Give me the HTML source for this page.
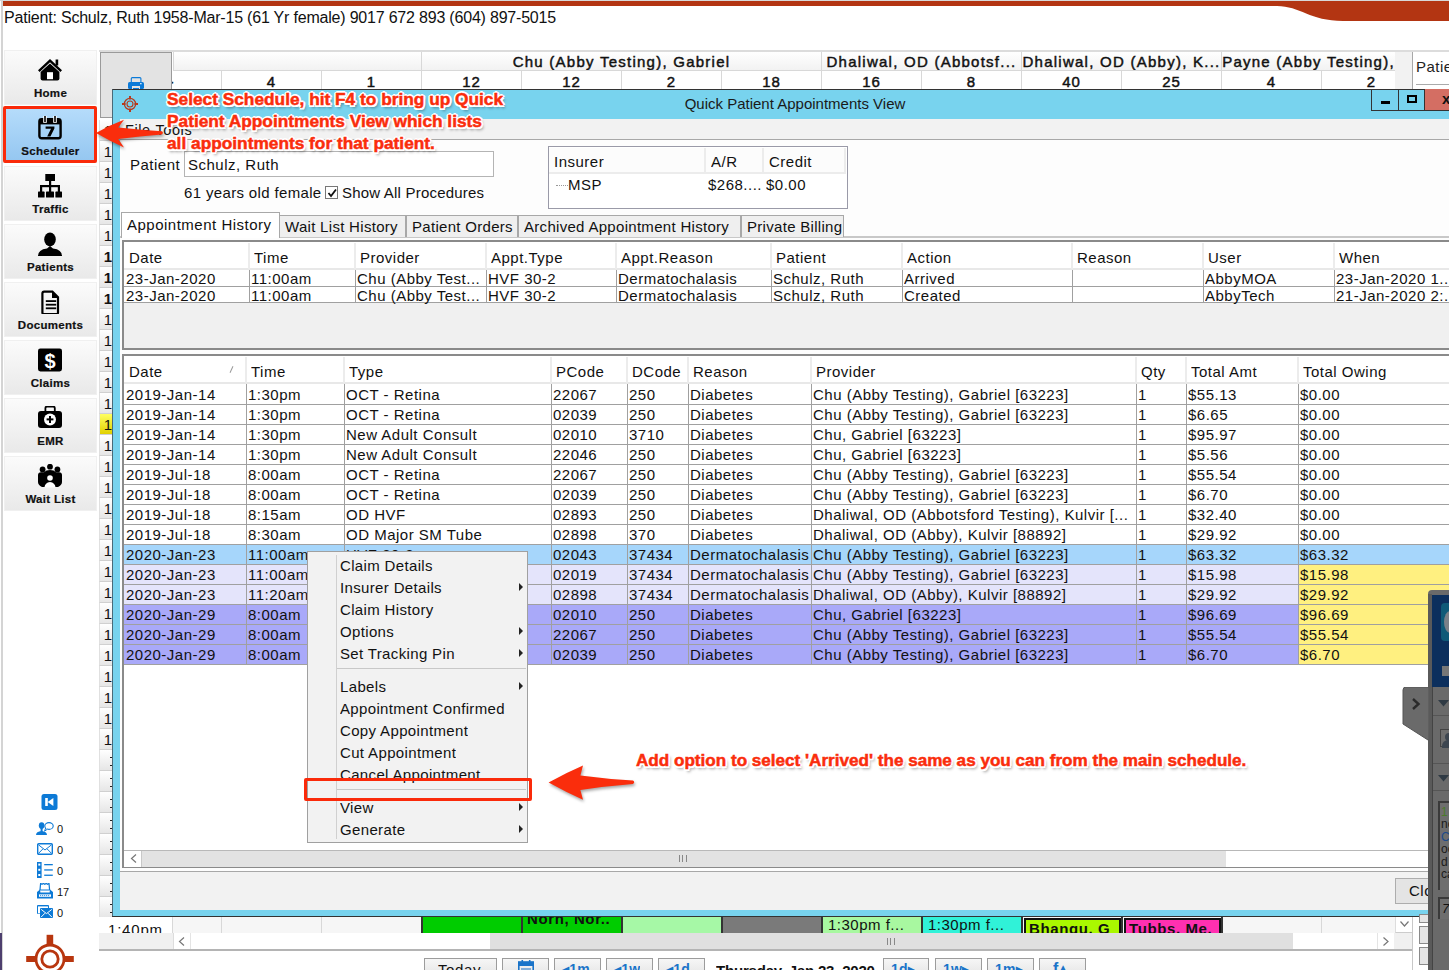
<!DOCTYPE html><html><head><meta charset="utf-8"><style>
*{margin:0;padding:0;box-sizing:border-box}
html,body{width:1449px;height:970px;overflow:hidden;background:#fff;font-family:"Liberation Sans", sans-serif;color:#111}
.ab{position:absolute}
.t{position:absolute;white-space:nowrap;font-size:15px;letter-spacing:0.5px;line-height:20px;overflow:hidden}
.sb{position:absolute;left:4px;width:93px;height:55px;background:linear-gradient(#fbfbfb,#e9e9e9);border:1px solid #f0f0f0}
.sbl{position:absolute;left:0;width:100%;top:35px;text-align:center;font-weight:bold;font-size:11.5px;letter-spacing:0.3px;color:#111;-webkit-text-stroke:0.2px #111}
.hdr{position:absolute;white-space:nowrap;font-size:15px;letter-spacing:1.25px;line-height:18px;text-align:center;color:#111;overflow:hidden;-webkit-text-stroke:0.45px #111}
</style></head><body>

<div class="ab" style="left:0;top:0;width:1449px;height:1px;background:#d8d8d8"></div>
<svg class="ab" style="left:0;top:0" width="1449" height="24"><path d="M3 1 H1449 V21 H1343 C1310 21 1300 6 1277 6 H3 Z" fill="#b33512"/></svg>
<div class="ab" style="left:4px;top:8px;font-size:16px;letter-spacing:-0.2px;line-height:20px;color:#111;white-space:nowrap">Patient: Schulz, Ruth 1958-Mar-15 (61 Yr female) 9017 672 893 (604) 897-5015</div>
<div class="ab" style="left:1px;top:0px;width:2px;height:970px;background:#d4d4d4"></div>
<div class="sb" style="top:50px;"><svg class="ab" style="left:33px;top:7px" width="24" height="24" viewBox="0 0 24 24"><path d="M0.8 13.2 L12 2.6 L23.2 13.2" fill="none" stroke="#000" stroke-width="2.4" stroke-linejoin="miter"/><rect x="17.6" y="1.5" width="2.6" height="6" fill="#000"/><path d="M2.6 14 L12 5.4 L21.4 14 V20.6 Q21.4 22.6 19.4 22.6 H4.6 Q2.6 22.6 2.6 20.6 Z" fill="#000"/><rect x="9" y="14.2" width="6" height="7" fill="#fff"/></svg><div class="sbl" style="top:36px">Home</div></div>
<div class="sb" style="top:108px;background:linear-gradient(#b5dcfb,#94c6f0);"><svg class="ab" style="left:33px;top:7px" width="24" height="24" viewBox="0 0 24 24"><rect x="1.4" y="3.2" width="21.2" height="19" rx="2.2" fill="none" stroke="#000" stroke-width="2.4"/><rect x="1.4" y="3.2" width="21.2" height="5.2" fill="#000"/><rect x="5.2" y="0" width="3.6" height="6.8" fill="#fff"/><rect x="15.2" y="0" width="3.6" height="6.8" fill="#fff"/><rect x="6.2" y="0" width="1.6" height="6" fill="#000"/><rect x="16.2" y="0" width="1.6" height="6" fill="#000"/><path d="M7.6 10.6 H16.4 V12.4 L12.4 20.6 H9.2 L13 12.8 H7.6 Z" fill="#000"/></svg><div class="sbl" style="top:36px">Scheduler</div></div>
<div class="sb" style="top:166px;"><svg class="ab" style="left:33px;top:7px" width="24" height="24" viewBox="0 0 24 24"><rect x="7.3" y="0" width="9.7" height="7" fill="#000"/><rect x="11" y="6" width="2.2" height="6" fill="#000"/><rect x="2" y="11" width="20" height="2.2" fill="#000"/><rect x="2" y="11" width="2.2" height="8" fill="#000"/><rect x="11" y="11" width="2.2" height="8" fill="#000"/><rect x="19.8" y="11" width="2.2" height="8" fill="#000"/><rect x="0" y="17.6" width="6.6" height="6" rx="0.6" fill="#000"/><rect x="8" y="17.6" width="8" height="6" rx="0.6" fill="#000"/><rect x="17.4" y="17.6" width="6.6" height="6" rx="0.6" fill="#000"/></svg><div class="sbl" style="top:36px">Traffic</div></div>
<div class="sb" style="top:224px;"><svg class="ab" style="left:33px;top:7px" width="24" height="24" viewBox="0 0 24 24"><ellipse cx="12" cy="7.4" rx="5.8" ry="7" fill="#000"/><path d="M0 24 Q0 17.5 9 16.5 L12 14 L15 16.5 Q24 17.5 24 24 Z" fill="#000"/></svg><div class="sbl" style="top:36px">Patients</div></div>
<div class="sb" style="top:282px;"><svg class="ab" style="left:33px;top:7px" width="24" height="24" viewBox="0 0 24 24"><path d="M4.4 3.4 Q4.4 1.6 6.2 1.6 H14.4 L20 7.2 V22.4 Q20 24 18.4 24 H6 Q4.4 24 4.4 22.4 Z" fill="none" stroke="#000" stroke-width="2.2"/><path d="M14 1.6 L20.4 8 H14 Z" fill="#000"/><rect x="7.8" y="10.2" width="10.4" height="1.8" fill="#000"/><rect x="7.8" y="13.8" width="10.4" height="1.8" fill="#000"/><rect x="7.8" y="17.4" width="10.4" height="1.8" fill="#000"/></svg><div class="sbl" style="top:36px">Documents</div></div>
<div class="sb" style="top:340px;"><svg class="ab" style="left:33px;top:7px" width="24" height="24" viewBox="0 0 24 24"><rect x="0" y="0.4" width="24" height="23" rx="2.4" fill="#000"/><text x="12" y="19.6" text-anchor="middle" font-family="Liberation Sans" font-weight="bold" font-size="20" fill="#fff">$</text></svg><div class="sbl" style="top:36px">Claims</div></div>
<div class="sb" style="top:398px;"><svg class="ab" style="left:33px;top:7px" width="24" height="24" viewBox="0 0 24 24"><rect x="7.4" y="0.6" width="9.4" height="6" rx="1.6" fill="none" stroke="#000" stroke-width="1.8"/><rect x="0" y="5" width="24" height="17" rx="3" fill="#000"/><circle cx="12" cy="13.4" r="6" fill="#fff"/><rect x="11" y="10" width="2" height="7" fill="#000"/><rect x="8.6" y="12.4" width="6.8" height="2" fill="#000"/></svg><div class="sbl" style="top:36px">EMR</div></div>
<div class="sb" style="top:456px;"><svg class="ab" style="left:33px;top:7px" width="24" height="24" viewBox="0 0 24 24"><circle cx="4.6" cy="5.4" r="2.9" fill="#000"/><circle cx="12" cy="2.7" r="2.9" fill="#000"/><circle cx="19.4" cy="5.4" r="2.9" fill="#000"/><path d="M0 11 Q0 8.4 3 8.2 L6 8.2 Q8 6 12 6 Q16 6 18 8.2 L21 8.2 Q24 8.4 24 11 V18 Q24 21 20 23 H4 Q0 21 0 18 Z" fill="#000"/><circle cx="12" cy="14" r="2.8" fill="#fff"/><path d="M6.4 23.4 Q7 18.6 12 18 Q17 18.6 17.6 23.4 Z" fill="#fff"/></svg><div class="sbl" style="top:36px">Wait List</div></div>
<svg class="ab" style="left:41px;top:794px" width="17" height="16" viewBox="0 0 17 16"><rect x="0.5" y="0" width="16" height="16" rx="2.5" fill="#0d7ad6"/><rect x="4.2" y="4" width="2.6" height="8" fill="#fff"/><path d="M6.6 8 L12.4 4 V12 Z" fill="#fff"/></svg>
<svg class="ab" style="left:36px;top:822px" width="18" height="14" viewBox="0 0 18 14"><ellipse cx="5.6" cy="3.6" rx="2.8" ry="3.4" fill="#0d7ad6"/><path d="M0 13 Q0 9.6 5.6 9 Q11 9.6 11 13 Z" fill="#0d7ad6"/><rect x="4.6" y="6" width="2" height="4" fill="#0d7ad6"/><ellipse cx="13" cy="4" rx="4.2" ry="3.4" fill="#fff" stroke="#0d7ad6" stroke-width="1.1"/><path d="M9.6 6 L8.6 9.2 L11.6 7" fill="#fff" stroke="#0d7ad6" stroke-width="1"/></svg>
<svg class="ab" style="left:37px;top:843px" width="16" height="12" viewBox="0 0 16 12"><rect x="0.7" y="0.7" width="14.6" height="10.6" rx="1" fill="none" stroke="#0d7ad6" stroke-width="1.4"/><path d="M1.5 1.8 L8 7 L14.5 1.8 M1.5 10.4 L6 5.8 M14.5 10.4 L10 5.8" fill="none" stroke="#0d7ad6" stroke-width="1"/></svg>
<svg class="ab" style="left:37px;top:862px" width="16" height="16" viewBox="0 0 16 16"><rect x="0" y="0" width="4.6" height="16" fill="#0d7ad6"/><rect x="1.3" y="1.6" width="2" height="2" fill="#fff"/><rect x="1.3" y="6.8" width="2" height="2" fill="#fff"/><rect x="1.3" y="12" width="2" height="2" fill="#fff"/><rect x="7.2" y="2" width="8.6" height="1.3" fill="#0d7ad6"/><rect x="7.2" y="7.3" width="8.6" height="1.3" fill="#0d7ad6"/><rect x="7.2" y="12.6" width="8.6" height="1.3" fill="#0d7ad6"/></svg>
<svg class="ab" style="left:37px;top:883px" width="16" height="16" viewBox="0 0 16 16"><path d="M3.6 0.4 L5 1.2 L6.4 0.4 L7.8 1.2 L9.2 0.4 L10.6 1.2 L12 0.4 L12.6 7 H3 Z" fill="#fff" stroke="#0d7ad6" stroke-width="1.2"/><path d="M0 9 L3 6.6 L3.4 9.6 H12.6 L13 6.6 L16 9 V15.6 H0 Z" fill="#0d7ad6"/><rect x="2" y="11.4" width="12" height="2.4" fill="#fff"/><path d="M3 12.6 H13" stroke="#0d7ad6" stroke-width="0.8" stroke-dasharray="1.2 0.8"/></svg>
<svg class="ab" style="left:37px;top:905px" width="16" height="13" viewBox="0 0 16 13"><rect x="0" y="0" width="12" height="9" rx="1" fill="#0d7ad6"/><rect x="1" y="1.4" width="10" height="7" fill="#fff"/><rect x="3" y="3" width="13" height="10" rx="1" fill="#0d7ad6"/><path d="M4.2 4.4 L9.5 8.6 L14.8 4.4 M4.2 12 L8 8.2 M14.8 12 L11 8.2" fill="none" stroke="#fff" stroke-width="1"/></svg>
<div class="ab" style="left:57px;top:822px;font-size:11px;line-height:14px;color:#111">0</div>
<div class="ab" style="left:57px;top:843px;font-size:11px;line-height:14px;color:#111">0</div>
<div class="ab" style="left:57px;top:864px;font-size:11px;line-height:14px;color:#111">0</div>
<div class="ab" style="left:57px;top:885px;font-size:11px;line-height:14px;color:#111">17</div>
<div class="ab" style="left:57px;top:906px;font-size:11px;line-height:14px;color:#111">0</div>
<svg class="ab" style="left:20px;top:930px" width="60" height="40" viewBox="0 0 60 40"><circle cx="30" cy="29" r="14" fill="none" stroke="#b8360f" stroke-width="2.8"/><circle cx="30" cy="29" r="8.2" fill="none" stroke="#b8360f" stroke-width="2.8"/><rect x="26.6" y="4.8" width="6.6" height="10" fill="#b8360f"/><rect x="6.2" y="26" width="10" height="6" fill="#b8360f"/><rect x="43.8" y="26" width="10" height="6" fill="#b8360f"/></svg>
<div class="ab" style="left:0;top:933px;width:2px;height:37px;background:#4d3f6e"></div>
<div class="ab" style="left:99px;top:50px;width:1350px;height:2px;background:#dcdcdc"></div>
<div class="hdr" style="left:173px;top:52px;width:248px;height:19px;background:linear-gradient(#fff,#f2f2f2);border-left:1px solid #d8d8d8;border-bottom:1px solid #d8d8d8;top:52px;padding-top:1px"></div>
<div class="hdr" style="left:421px;top:52px;width:400px;height:19px;background:linear-gradient(#fff,#f2f2f2);border-left:1px solid #d8d8d8;border-bottom:1px solid #d8d8d8;top:52px;padding-top:1px">Chu (Abby Testing), Gabriel</div>
<div class="hdr" style="left:821px;top:52px;width:200px;height:19px;background:linear-gradient(#fff,#f2f2f2);border-left:1px solid #d8d8d8;border-bottom:1px solid #d8d8d8;top:52px;padding-top:1px">Dhaliwal, OD (Abbotsf...</div>
<div class="hdr" style="left:1021px;top:52px;width:200px;height:19px;background:linear-gradient(#fff,#f2f2f2);border-left:1px solid #d8d8d8;border-bottom:1px solid #d8d8d8;top:52px;padding-top:1px">Dhaliwal, OD (Abby), K...</div>
<div class="hdr" style="left:1221px;top:52px;width:174px;height:19px;background:linear-gradient(#fff,#f2f2f2);border-left:1px solid #d8d8d8;border-bottom:1px solid #d8d8d8;top:52px;padding-top:1px">Payne (Abby Testing),</div>
<div class="hdr" style="left:121px;top:71px;width:100px;height:19px;border-left:1px solid #d8d8d8;letter-spacing:1px;padding-top:2px">-</div>
<div class="hdr" style="left:221px;top:71px;width:100px;height:19px;border-left:1px solid #d8d8d8;letter-spacing:1px;padding-top:2px">4</div>
<div class="hdr" style="left:321px;top:71px;width:100px;height:19px;border-left:1px solid #d8d8d8;letter-spacing:1px;padding-top:2px">1</div>
<div class="hdr" style="left:421px;top:71px;width:100px;height:19px;border-left:1px solid #d8d8d8;letter-spacing:1px;padding-top:2px">12</div>
<div class="hdr" style="left:521px;top:71px;width:100px;height:19px;border-left:1px solid #d8d8d8;letter-spacing:1px;padding-top:2px">12</div>
<div class="hdr" style="left:621px;top:71px;width:100px;height:19px;border-left:1px solid #d8d8d8;letter-spacing:1px;padding-top:2px">2</div>
<div class="hdr" style="left:721px;top:71px;width:100px;height:19px;border-left:1px solid #d8d8d8;letter-spacing:1px;padding-top:2px">18</div>
<div class="hdr" style="left:821px;top:71px;width:100px;height:19px;border-left:1px solid #d8d8d8;letter-spacing:1px;padding-top:2px">16</div>
<div class="hdr" style="left:921px;top:71px;width:100px;height:19px;border-left:1px solid #d8d8d8;letter-spacing:1px;padding-top:2px">8</div>
<div class="hdr" style="left:1021px;top:71px;width:100px;height:19px;border-left:1px solid #d8d8d8;letter-spacing:1px;padding-top:2px">40</div>
<div class="hdr" style="left:1121px;top:71px;width:100px;height:19px;border-left:1px solid #d8d8d8;letter-spacing:1px;padding-top:2px">25</div>
<div class="hdr" style="left:1221px;top:71px;width:100px;height:19px;border-left:1px solid #d8d8d8;letter-spacing:1px;padding-top:2px">4</div>
<div class="hdr" style="left:1321px;top:71px;width:100px;height:19px;border-left:1px solid #d8d8d8;letter-spacing:1px;padding-top:2px">2</div>
<div class="ab" style="left:100px;top:52px;width:72px;height:66px;background:#e3e3e3;border:1px solid #9a9a9a"></div>
<svg class="ab" style="left:128px;top:77px" width="16" height="12" viewBox="0 0 16 12"><rect x="3.3" y="0.6" width="9.6" height="5.6" rx="1" fill="none" stroke="#0b7ad8" stroke-width="1.1"/><rect x="0" y="5" width="16" height="7" rx="1.6" fill="#0b7ad8"/><rect x="4" y="9" width="8" height="3" fill="#e3e3e3"/><rect x="5" y="11" width="6" height="1" fill="#0b7ad8"/><rect x="12.2" y="6" width="1.3" height="1.3" fill="#fff"/></svg>
<div class="ab" style="left:1395px;top:52px;width:17px;height:38px;background:#f2f2f2"></div>
<div class="ab" style="left:1413px;top:52px;width:36px;height:38px;background:#fff"></div>
<div class="ab" style="left:1412px;top:52px;width:1px;height:38px;background:#a8a8a8"></div>
<div class="t" style="left:1416px;top:57px;color:#222">Patie</div>
<div class="ab" style="left:1416px;top:84px;width:33px;height:1px;background:#aaa"></div>
<div class="ab" style="left:99px;top:119.5px;width:14px;height:21px;background:linear-gradient(#fff,#e6e6e6);border-bottom:1px solid #d0d0d0;border-left:1px solid #e0e0e0;font-size:15px;line-height:21px;text-align:right;padding-right:1px;">1</div>
<div class="ab" style="left:99px;top:140.5px;width:14px;height:21px;background:linear-gradient(#fff,#e6e6e6);border-bottom:1px solid #d0d0d0;border-left:1px solid #e0e0e0;font-size:15px;line-height:21px;text-align:right;padding-right:1px;">1</div>
<div class="ab" style="left:99px;top:161.5px;width:14px;height:21px;background:linear-gradient(#fff,#e6e6e6);border-bottom:1px solid #d0d0d0;border-left:1px solid #e0e0e0;font-size:15px;line-height:21px;text-align:right;padding-right:1px;">1</div>
<div class="ab" style="left:99px;top:182.5px;width:14px;height:21px;background:linear-gradient(#fff,#e6e6e6);border-bottom:1px solid #d0d0d0;border-left:1px solid #e0e0e0;font-size:15px;line-height:21px;text-align:right;padding-right:1px;">1</div>
<div class="ab" style="left:99px;top:203.5px;width:14px;height:21px;background:linear-gradient(#fff,#e6e6e6);border-bottom:1px solid #d0d0d0;border-left:1px solid #e0e0e0;font-size:15px;line-height:21px;text-align:right;padding-right:1px;">1</div>
<div class="ab" style="left:99px;top:224.5px;width:14px;height:21px;background:linear-gradient(#fff,#e6e6e6);border-bottom:1px solid #d0d0d0;border-left:1px solid #e0e0e0;font-size:15px;line-height:21px;text-align:right;padding-right:1px;">1</div>
<div class="ab" style="left:99px;top:245.5px;width:14px;height:21px;background:linear-gradient(#fff,#e6e6e6);border-bottom:1px solid #d0d0d0;border-left:1px solid #e0e0e0;font-size:15px;line-height:21px;text-align:right;padding-right:1px;font-weight:bold;">1</div>
<div class="ab" style="left:99px;top:266.5px;width:14px;height:21px;background:linear-gradient(#fff,#e6e6e6);border-bottom:1px solid #d0d0d0;border-left:1px solid #e0e0e0;font-size:15px;line-height:21px;text-align:right;padding-right:1px;font-weight:bold;">1</div>
<div class="ab" style="left:99px;top:287.5px;width:14px;height:21px;background:linear-gradient(#fff,#e6e6e6);border-bottom:1px solid #d0d0d0;border-left:1px solid #e0e0e0;font-size:15px;line-height:21px;text-align:right;padding-right:1px;font-weight:bold;">1</div>
<div class="ab" style="left:99px;top:308.5px;width:14px;height:21px;background:linear-gradient(#fff,#e6e6e6);border-bottom:1px solid #d0d0d0;border-left:1px solid #e0e0e0;font-size:15px;line-height:21px;text-align:right;padding-right:1px;">1</div>
<div class="ab" style="left:99px;top:329.5px;width:14px;height:21px;background:linear-gradient(#fff,#e6e6e6);border-bottom:1px solid #d0d0d0;border-left:1px solid #e0e0e0;font-size:15px;line-height:21px;text-align:right;padding-right:1px;">1</div>
<div class="ab" style="left:99px;top:350.5px;width:14px;height:21px;background:linear-gradient(#fff,#e6e6e6);border-bottom:1px solid #d0d0d0;border-left:1px solid #e0e0e0;font-size:15px;line-height:21px;text-align:right;padding-right:1px;">1</div>
<div class="ab" style="left:99px;top:371.5px;width:14px;height:21px;background:linear-gradient(#fff,#e6e6e6);border-bottom:1px solid #d0d0d0;border-left:1px solid #e0e0e0;font-size:15px;line-height:21px;text-align:right;padding-right:1px;">1</div>
<div class="ab" style="left:99px;top:392.5px;width:14px;height:21px;background:linear-gradient(#fff,#e6e6e6);border-bottom:1px solid #d0d0d0;border-left:1px solid #e0e0e0;font-size:15px;line-height:21px;text-align:right;padding-right:1px;">1</div>
<div class="ab" style="left:99px;top:413.5px;width:14px;height:21px;background:linear-gradient(#ffff60,#e0d000);border-bottom:1px solid #d0d0d0;border-left:1px solid #e0e0e0;font-size:15px;line-height:21px;text-align:right;padding-right:1px;">1</div>
<div class="ab" style="left:99px;top:434.5px;width:14px;height:21px;background:linear-gradient(#fff,#e6e6e6);border-bottom:1px solid #d0d0d0;border-left:1px solid #e0e0e0;font-size:15px;line-height:21px;text-align:right;padding-right:1px;">1</div>
<div class="ab" style="left:99px;top:455.5px;width:14px;height:21px;background:linear-gradient(#fff,#e6e6e6);border-bottom:1px solid #d0d0d0;border-left:1px solid #e0e0e0;font-size:15px;line-height:21px;text-align:right;padding-right:1px;">1</div>
<div class="ab" style="left:99px;top:476.5px;width:14px;height:21px;background:linear-gradient(#fff,#e6e6e6);border-bottom:1px solid #d0d0d0;border-left:1px solid #e0e0e0;font-size:15px;line-height:21px;text-align:right;padding-right:1px;">1</div>
<div class="ab" style="left:99px;top:497.5px;width:14px;height:21px;background:linear-gradient(#fff,#e6e6e6);border-bottom:1px solid #d0d0d0;border-left:1px solid #e0e0e0;font-size:15px;line-height:21px;text-align:right;padding-right:1px;">1</div>
<div class="ab" style="left:99px;top:518.5px;width:14px;height:21px;background:linear-gradient(#fff,#e6e6e6);border-bottom:1px solid #d0d0d0;border-left:1px solid #e0e0e0;font-size:15px;line-height:21px;text-align:right;padding-right:1px;">1</div>
<div class="ab" style="left:99px;top:539.5px;width:14px;height:21px;background:linear-gradient(#fff,#e6e6e6);border-bottom:1px solid #d0d0d0;border-left:1px solid #e0e0e0;font-size:15px;line-height:21px;text-align:right;padding-right:1px;">1</div>
<div class="ab" style="left:99px;top:560.5px;width:14px;height:21px;background:linear-gradient(#fff,#e6e6e6);border-bottom:1px solid #d0d0d0;border-left:1px solid #e0e0e0;font-size:15px;line-height:21px;text-align:right;padding-right:1px;">1</div>
<div class="ab" style="left:99px;top:581.5px;width:14px;height:21px;background:linear-gradient(#fff,#e6e6e6);border-bottom:1px solid #d0d0d0;border-left:1px solid #e0e0e0;font-size:15px;line-height:21px;text-align:right;padding-right:1px;">1</div>
<div class="ab" style="left:99px;top:602.5px;width:14px;height:21px;background:linear-gradient(#fff,#e6e6e6);border-bottom:1px solid #d0d0d0;border-left:1px solid #e0e0e0;font-size:15px;line-height:21px;text-align:right;padding-right:1px;">1</div>
<div class="ab" style="left:99px;top:623.5px;width:14px;height:21px;background:linear-gradient(#fff,#e6e6e6);border-bottom:1px solid #d0d0d0;border-left:1px solid #e0e0e0;font-size:15px;line-height:21px;text-align:right;padding-right:1px;">1</div>
<div class="ab" style="left:99px;top:644.5px;width:14px;height:21px;background:linear-gradient(#fff,#e6e6e6);border-bottom:1px solid #d0d0d0;border-left:1px solid #e0e0e0;font-size:15px;line-height:21px;text-align:right;padding-right:1px;">1</div>
<div class="ab" style="left:99px;top:665.5px;width:14px;height:21px;background:linear-gradient(#fff,#e6e6e6);border-bottom:1px solid #d0d0d0;border-left:1px solid #e0e0e0;font-size:15px;line-height:21px;text-align:right;padding-right:1px;">1</div>
<div class="ab" style="left:99px;top:686.5px;width:14px;height:21px;background:linear-gradient(#fff,#e6e6e6);border-bottom:1px solid #d0d0d0;border-left:1px solid #e0e0e0;font-size:15px;line-height:21px;text-align:right;padding-right:1px;">1</div>
<div class="ab" style="left:99px;top:707.5px;width:14px;height:21px;background:linear-gradient(#fff,#e6e6e6);border-bottom:1px solid #d0d0d0;border-left:1px solid #e0e0e0;font-size:15px;line-height:21px;text-align:right;padding-right:1px;">1</div>
<div class="ab" style="left:99px;top:728.5px;width:14px;height:21px;background:linear-gradient(#fff,#e6e6e6);border-bottom:1px solid #d0d0d0;border-left:1px solid #e0e0e0;font-size:15px;line-height:21px;text-align:right;padding-right:1px;">1</div>
<div class="ab" style="left:99px;top:749.5px;width:14px;height:21px;background:linear-gradient(#fff,#e6e6e6);border-bottom:1px solid #d0d0d0;border-left:1px solid #e0e0e0;font-size:15px;line-height:21px;text-align:right;padding-right:1px;"><div class="ab" style="left:10px;top:7px;width:3px;height:1.5px;background:#222"></div><div class="ab" style="left:10px;top:15px;width:3px;height:1.5px;background:#222"></div></div>
<div class="ab" style="left:99px;top:770.5px;width:14px;height:21px;background:linear-gradient(#fff,#e6e6e6);border-bottom:1px solid #d0d0d0;border-left:1px solid #e0e0e0;font-size:15px;line-height:21px;text-align:right;padding-right:1px;"><div class="ab" style="left:10px;top:7px;width:3px;height:1.5px;background:#222"></div><div class="ab" style="left:10px;top:15px;width:3px;height:1.5px;background:#222"></div></div>
<div class="ab" style="left:99px;top:791.5px;width:14px;height:21px;background:linear-gradient(#fff,#e6e6e6);border-bottom:1px solid #d0d0d0;border-left:1px solid #e0e0e0;font-size:15px;line-height:21px;text-align:right;padding-right:1px;"><div class="ab" style="left:10px;top:7px;width:3px;height:1.5px;background:#222"></div><div class="ab" style="left:10px;top:15px;width:3px;height:1.5px;background:#222"></div></div>
<div class="ab" style="left:99px;top:812.5px;width:14px;height:21px;background:linear-gradient(#fff,#e6e6e6);border-bottom:1px solid #d0d0d0;border-left:1px solid #e0e0e0;font-size:15px;line-height:21px;text-align:right;padding-right:1px;"><div class="ab" style="left:10px;top:7px;width:3px;height:1.5px;background:#222"></div><div class="ab" style="left:10px;top:15px;width:3px;height:1.5px;background:#222"></div></div>
<div class="ab" style="left:99px;top:833.5px;width:14px;height:21px;background:linear-gradient(#fff,#e6e6e6);border-bottom:1px solid #d0d0d0;border-left:1px solid #e0e0e0;font-size:15px;line-height:21px;text-align:right;padding-right:1px;"><div class="ab" style="left:10px;top:7px;width:3px;height:1.5px;background:#222"></div><div class="ab" style="left:10px;top:15px;width:3px;height:1.5px;background:#222"></div></div>
<div class="ab" style="left:99px;top:854.5px;width:14px;height:21px;background:linear-gradient(#fff,#e6e6e6);border-bottom:1px solid #d0d0d0;border-left:1px solid #e0e0e0;font-size:15px;line-height:21px;text-align:right;padding-right:1px;"><div class="ab" style="left:10px;top:7px;width:3px;height:1.5px;background:#222"></div><div class="ab" style="left:10px;top:15px;width:3px;height:1.5px;background:#222"></div></div>
<div class="ab" style="left:99px;top:875.5px;width:14px;height:21px;background:linear-gradient(#fff,#e6e6e6);border-bottom:1px solid #d0d0d0;border-left:1px solid #e0e0e0;font-size:15px;line-height:21px;text-align:right;padding-right:1px;"><div class="ab" style="left:10px;top:7px;width:3px;height:1.5px;background:#222"></div><div class="ab" style="left:10px;top:15px;width:3px;height:1.5px;background:#222"></div></div>
<div class="ab" style="left:99px;top:896.5px;width:14px;height:21px;background:linear-gradient(#fff,#e6e6e6);border-bottom:1px solid #d0d0d0;border-left:1px solid #e0e0e0;font-size:15px;line-height:21px;text-align:right;padding-right:1px;"><div class="ab" style="left:10px;top:7px;width:3px;height:1.5px;background:#222"></div><div class="ab" style="left:10px;top:15px;width:3px;height:1.5px;background:#222"></div></div>
<div class="ab" style="left:112px;top:89px;width:1400px;height:828px;background:#78d3ee;border-top:1px solid #333;border-left:1px solid #4a6a78"></div>
<div class="ab" style="left:112px;top:916px;width:1316px;height:1px;background:#333"></div>
<div class="ab" style="left:600px;top:94px;width:390px;text-align:center;font-size:15px;line-height:20px;color:#1a1a1a">Quick Patient Appointments View</div>
<div class="ab" style="left:1371px;top:89px;width:28px;height:22px;border:1px solid #333;border-top:none"><div class="ab" style="left:9px;top:12px;width:9px;height:3px;background:#000"></div></div>
<div class="ab" style="left:1398px;top:89px;width:27px;height:22px;border:1px solid #333;border-top:none"><div class="ab" style="left:8px;top:6px;width:10px;height:8px;border:2px solid #000"></div></div>
<div class="ab" style="left:1425px;top:89px;width:30px;height:22px;background:#d46e63;border-bottom:1px solid #333"><div class="ab" style="left:17px;top:1px;font-weight:bold;font-size:15px">x</div></div>
<svg class="ab" style="left:121px;top:95px" width="18" height="18" viewBox="0 0 18 18"><circle cx="9" cy="9" r="5.6" fill="none" stroke="#b83a1c" stroke-width="1.3"/><circle cx="9" cy="9" r="3" fill="none" stroke="#b83a1c" stroke-width="1.1"/><path d="M9 1v3.6M9 13.4v3.6M1 9h3.6M13.4 9h3.6" stroke="#b83a1c" stroke-width="2"/></svg>
<div class="ab" style="left:120px;top:119px;width:1400px;height:21px;background:#f2f2f2;border-bottom:1px solid #a8a8a8"></div>
<div class="t" style="left:125px;top:120px;font-size:14.5px;letter-spacing:0.6px">File&nbsp;Tools</div>
<div class="ab" style="left:120px;top:140px;width:1400px;height:732px;background:#fdfdfd"></div>
<div class="ab" style="left:120px;top:871px;width:1400px;height:39px;background:#f2f2f2;border-top:1px solid #a8a8a8"></div>
<div class="ab" style="left:1395px;top:878px;width:60px;height:26px;background:#e4e4e4;border:1px solid #adadad"></div>
<div class="t" style="left:1409px;top:881px;font-size:15px">Clo</div>
<div class="t" style="left:130px;top:155px">Patient</div>
<div class="ab" style="left:184px;top:151px;width:310px;height:26px;border:1px solid #b4b4b4;background:#fff"></div>
<div class="t" style="left:188px;top:155px">Schulz, Ruth</div>
<div class="t" style="left:184px;top:183px;letter-spacing:0.35px">61 years old female</div>
<div class="ab" style="left:325px;top:186px;width:13px;height:13px;border:1px solid #777;background:#fff"><svg class="ab" style="left:1px;top:1px" width="10" height="10"><path d="M1.5 5 L4 8 L9 1.5" fill="none" stroke="#111" stroke-width="1.8"/></svg></div>
<div class="t" style="left:342px;top:183px;letter-spacing:0.2px">Show All Procedures</div>
<div class="ab" style="left:548px;top:146px;width:300px;height:63px;border:1px solid #9a9aa8;background:#fff"></div>
<div class="ab" style="left:549px;top:148px;width:157px;height:26px;border-right:2px solid #ececec;border-bottom:2px solid #ececec;background:#fcfcfc"></div>
<div class="t" style="left:554px;top:152px">Insurer</div>
<div class="ab" style="left:706px;top:148px;width:58px;height:26px;border-right:2px solid #ececec;border-bottom:2px solid #ececec;background:#fcfcfc"></div>
<div class="t" style="left:711px;top:152px">A/R</div>
<div class="ab" style="left:764px;top:148px;width:82px;height:26px;border-right:2px solid #ececec;border-bottom:2px solid #ececec;background:#fcfcfc"></div>
<div class="t" style="left:769px;top:152px">Credit</div>
<div class="ab" style="left:556px;top:185px;width:12px;border-top:1px dotted #999"></div>
<div class="t" style="left:568px;top:175px">MSP</div>
<div class="t" style="left:708px;top:175px;width:57px">$268....</div>
<div class="t" style="left:766px;top:175px">$0.00</div>
<div class="ab" style="left:120px;top:236px;width:1400px;height:2px;background:#c8c8c8"></div>
<div class="ab" style="left:279px;top:215px;width:127px;height:22px;background:#efefef;border:1px solid #a8a8a8;border-bottom:none"></div>
<div class="t" style="left:285px;top:217px;letter-spacing:0.3px">Wait List History</div>
<div class="ab" style="left:406px;top:215px;width:112px;height:22px;background:#efefef;border:1px solid #a8a8a8;border-bottom:none"></div>
<div class="t" style="left:412px;top:217px;letter-spacing:0.3px">Patient Orders</div>
<div class="ab" style="left:518px;top:215px;width:223px;height:22px;background:#efefef;border:1px solid #a8a8a8;border-bottom:none"></div>
<div class="t" style="left:524px;top:217px;letter-spacing:0.3px">Archived Appointment History</div>
<div class="ab" style="left:741px;top:215px;width:103px;height:22px;background:#efefef;border:1px solid #a8a8a8;border-bottom:none"></div>
<div class="t" style="left:747px;top:217px;letter-spacing:0.3px">Private Billing</div>
<div class="ab" style="left:121px;top:212px;width:159px;height:26px;background:#fff;border:1px solid #a8a8a8;border-bottom:none"></div>
<div class="t" style="left:127px;top:215px">Appointment History</div>
<div class="ab" style="left:122px;top:240px;width:1400px;height:110px;background:#f0f0f0;border:2px solid #8a8a8a;border-right:none"></div>
<div class="ab" style="left:124px;top:242px;width:1400px;height:28px;background:#fff;border-bottom:2px solid #e8e8e8"></div>
<div class="t" style="left:129px;top:248px">Date</div>
<div class="ab" style="left:248px;top:243px;width:2px;height:26px;background:#ececec"></div>
<div class="t" style="left:254px;top:248px">Time</div>
<div class="ab" style="left:354px;top:243px;width:2px;height:26px;background:#ececec"></div>
<div class="t" style="left:360px;top:248px">Provider</div>
<div class="ab" style="left:485px;top:243px;width:2px;height:26px;background:#ececec"></div>
<div class="t" style="left:491px;top:248px">Appt.Type</div>
<div class="ab" style="left:615px;top:243px;width:2px;height:26px;background:#ececec"></div>
<div class="t" style="left:621px;top:248px">Appt.Reason</div>
<div class="ab" style="left:770px;top:243px;width:2px;height:26px;background:#ececec"></div>
<div class="t" style="left:776px;top:248px">Patient</div>
<div class="ab" style="left:901px;top:243px;width:2px;height:26px;background:#ececec"></div>
<div class="t" style="left:907px;top:248px">Action</div>
<div class="ab" style="left:1071px;top:243px;width:2px;height:26px;background:#ececec"></div>
<div class="t" style="left:1077px;top:248px">Reason</div>
<div class="ab" style="left:1202px;top:243px;width:2px;height:26px;background:#ececec"></div>
<div class="t" style="left:1208px;top:248px">User</div>
<div class="ab" style="left:1333px;top:243px;width:2px;height:26px;background:#ececec"></div>
<div class="t" style="left:1339px;top:248px">When</div>
<div class="ab" style="left:124px;top:270px;width:1400px;height:17px;background:#fff;border-bottom:1px solid #a0a0a0"></div>
<div class="t" style="left:126px;top:269px;width:123px">23-Jan-2020</div>
<div class="ab" style="left:249px;top:270px;width:1px;height:17px;background:#a0a0a0"></div>
<div class="t" style="left:251px;top:269px;width:104px">11:00am</div>
<div class="ab" style="left:355px;top:270px;width:1px;height:17px;background:#a0a0a0"></div>
<div class="t" style="left:357px;top:269px;width:129px">Chu (Abby Test...</div>
<div class="ab" style="left:486px;top:270px;width:1px;height:17px;background:#a0a0a0"></div>
<div class="t" style="left:488px;top:269px;width:128px">HVF 30-2</div>
<div class="ab" style="left:616px;top:270px;width:1px;height:17px;background:#a0a0a0"></div>
<div class="t" style="left:618px;top:269px;width:153px">Dermatochalasis</div>
<div class="ab" style="left:771px;top:270px;width:1px;height:17px;background:#a0a0a0"></div>
<div class="t" style="left:773px;top:269px;width:129px">Schulz, Ruth</div>
<div class="ab" style="left:902px;top:270px;width:1px;height:17px;background:#a0a0a0"></div>
<div class="t" style="left:904px;top:269px;width:168px">Arrived</div>
<div class="ab" style="left:1072px;top:270px;width:1px;height:17px;background:#a0a0a0"></div>
<div class="t" style="left:1074px;top:269px;width:129px"></div>
<div class="ab" style="left:1203px;top:270px;width:1px;height:17px;background:#a0a0a0"></div>
<div class="t" style="left:1205px;top:269px;width:129px">AbbyMOA</div>
<div class="ab" style="left:1334px;top:270px;width:1px;height:17px;background:#a0a0a0"></div>
<div class="t" style="left:1336px;top:269px;width:113px">23-Jan-2020 1...</div>
<div class="ab" style="left:124px;top:287px;width:1400px;height:16px;background:#fff;border-bottom:1px solid #a0a0a0"></div>
<div class="t" style="left:126px;top:286px;width:123px">23-Jan-2020</div>
<div class="ab" style="left:249px;top:287px;width:1px;height:16px;background:#a0a0a0"></div>
<div class="t" style="left:251px;top:286px;width:104px">11:00am</div>
<div class="ab" style="left:355px;top:287px;width:1px;height:16px;background:#a0a0a0"></div>
<div class="t" style="left:357px;top:286px;width:129px">Chu (Abby Test...</div>
<div class="ab" style="left:486px;top:287px;width:1px;height:16px;background:#a0a0a0"></div>
<div class="t" style="left:488px;top:286px;width:128px">HVF 30-2</div>
<div class="ab" style="left:616px;top:287px;width:1px;height:16px;background:#a0a0a0"></div>
<div class="t" style="left:618px;top:286px;width:153px">Dermatochalasis</div>
<div class="ab" style="left:771px;top:287px;width:1px;height:16px;background:#a0a0a0"></div>
<div class="t" style="left:773px;top:286px;width:129px">Schulz, Ruth</div>
<div class="ab" style="left:902px;top:287px;width:1px;height:16px;background:#a0a0a0"></div>
<div class="t" style="left:904px;top:286px;width:168px">Created</div>
<div class="ab" style="left:1072px;top:287px;width:1px;height:16px;background:#a0a0a0"></div>
<div class="t" style="left:1074px;top:286px;width:129px"></div>
<div class="ab" style="left:1203px;top:287px;width:1px;height:16px;background:#a0a0a0"></div>
<div class="t" style="left:1205px;top:286px;width:129px">AbbyTech</div>
<div class="ab" style="left:1334px;top:287px;width:1px;height:16px;background:#a0a0a0"></div>
<div class="t" style="left:1336px;top:286px;width:113px">21-Jan-2020 2:...</div>
<div class="ab" style="left:122px;top:354px;width:1400px;height:514px;background:#fff;border:2px solid #8a8a8a;border-right:none"></div>
<div class="ab" style="left:124px;top:356px;width:1400px;height:28px;background:#fff;border-bottom:2px solid #e8e8e8"></div>
<div class="t" style="left:129px;top:362px">Date</div>
<div class="ab" style="left:245px;top:357px;width:2px;height:26px;background:#ececec"></div>
<div class="t" style="left:251px;top:362px">Time</div>
<div class="ab" style="left:343px;top:357px;width:2px;height:26px;background:#ececec"></div>
<div class="t" style="left:349px;top:362px">Type</div>
<div class="ab" style="left:550px;top:357px;width:2px;height:26px;background:#ececec"></div>
<div class="t" style="left:556px;top:362px">PCode</div>
<div class="ab" style="left:626px;top:357px;width:2px;height:26px;background:#ececec"></div>
<div class="t" style="left:632px;top:362px">DCode</div>
<div class="ab" style="left:687px;top:357px;width:2px;height:26px;background:#ececec"></div>
<div class="t" style="left:693px;top:362px">Reason</div>
<div class="ab" style="left:810px;top:357px;width:2px;height:26px;background:#ececec"></div>
<div class="t" style="left:816px;top:362px">Provider</div>
<div class="ab" style="left:1135px;top:357px;width:2px;height:26px;background:#ececec"></div>
<div class="t" style="left:1141px;top:362px">Qty</div>
<div class="ab" style="left:1185px;top:357px;width:2px;height:26px;background:#ececec"></div>
<div class="t" style="left:1191px;top:362px">Total Amt</div>
<div class="ab" style="left:1297px;top:357px;width:2px;height:26px;background:#ececec"></div>
<div class="t" style="left:1303px;top:362px">Total Owing</div>
<div class="ab" style="left:231px;top:366px;width:1px;height:7px;background:#999;transform:rotate(25deg)"></div>
<div class="ab" style="left:124px;top:384px;width:1400px;height:20px;background:#fff"></div>
<div class="ab" style="left:124px;top:404px;width:1400px;height:20px;background:#fff"></div>
<div class="ab" style="left:124px;top:424px;width:1400px;height:20px;background:#fff"></div>
<div class="ab" style="left:124px;top:444px;width:1400px;height:20px;background:#fff"></div>
<div class="ab" style="left:124px;top:464px;width:1400px;height:20px;background:#fff"></div>
<div class="ab" style="left:124px;top:484px;width:1400px;height:20px;background:#fff"></div>
<div class="ab" style="left:124px;top:504px;width:1400px;height:20px;background:#fff"></div>
<div class="ab" style="left:124px;top:524px;width:1400px;height:20px;background:#fff"></div>
<div class="ab" style="left:124px;top:544px;width:1400px;height:20px;background:#a6d6fb"></div>
<div class="ab" style="left:124px;top:564px;width:1400px;height:20px;background:#e4e4fb"></div>
<div class="ab" style="left:1298px;top:564px;width:151px;height:20px;background:#fff080"></div>
<div class="ab" style="left:124px;top:584px;width:1400px;height:20px;background:#e4e4fb"></div>
<div class="ab" style="left:1298px;top:584px;width:151px;height:20px;background:#fff080"></div>
<div class="ab" style="left:124px;top:604px;width:1400px;height:20px;background:#a9a9f9"></div>
<div class="ab" style="left:1298px;top:604px;width:151px;height:20px;background:#fff080"></div>
<div class="ab" style="left:124px;top:624px;width:1400px;height:20px;background:#a9a9f9"></div>
<div class="ab" style="left:1298px;top:624px;width:151px;height:20px;background:#fff080"></div>
<div class="ab" style="left:124px;top:644px;width:1400px;height:20px;background:#a9a9f9"></div>
<div class="ab" style="left:1298px;top:644px;width:151px;height:20px;background:#fff080"></div>
<div class="ab" style="left:124px;top:404px;width:1400px;height:1px;background:#a0a0a0"></div>
<div class="ab" style="left:124px;top:424px;width:1400px;height:1px;background:#a0a0a0"></div>
<div class="ab" style="left:124px;top:444px;width:1400px;height:1px;background:#a0a0a0"></div>
<div class="ab" style="left:124px;top:464px;width:1400px;height:1px;background:#a0a0a0"></div>
<div class="ab" style="left:124px;top:484px;width:1400px;height:1px;background:#a0a0a0"></div>
<div class="ab" style="left:124px;top:504px;width:1400px;height:1px;background:#a0a0a0"></div>
<div class="ab" style="left:124px;top:524px;width:1400px;height:1px;background:#a0a0a0"></div>
<div class="ab" style="left:124px;top:544px;width:1400px;height:1px;background:#a0a0a0"></div>
<div class="ab" style="left:124px;top:564px;width:1400px;height:1px;background:#a0a0a0"></div>
<div class="ab" style="left:124px;top:584px;width:1400px;height:1px;background:#a0a0a0"></div>
<div class="ab" style="left:124px;top:604px;width:1400px;height:1px;background:#a0a0a0"></div>
<div class="ab" style="left:124px;top:624px;width:1400px;height:1px;background:#a0a0a0"></div>
<div class="ab" style="left:124px;top:644px;width:1400px;height:1px;background:#a0a0a0"></div>
<div class="ab" style="left:124px;top:664px;width:1400px;height:1px;background:#a0a0a0"></div>
<div class="ab" style="left:246px;top:384px;width:1px;height:281px;background:#a0a0a0"></div>
<div class="ab" style="left:344px;top:384px;width:1px;height:281px;background:#a0a0a0"></div>
<div class="ab" style="left:551px;top:384px;width:1px;height:281px;background:#a0a0a0"></div>
<div class="ab" style="left:627px;top:384px;width:1px;height:281px;background:#a0a0a0"></div>
<div class="ab" style="left:688px;top:384px;width:1px;height:281px;background:#a0a0a0"></div>
<div class="ab" style="left:811px;top:384px;width:1px;height:281px;background:#a0a0a0"></div>
<div class="ab" style="left:1136px;top:384px;width:1px;height:281px;background:#a0a0a0"></div>
<div class="ab" style="left:1186px;top:384px;width:1px;height:281px;background:#a0a0a0"></div>
<div class="ab" style="left:1298px;top:384px;width:1px;height:281px;background:#a0a0a0"></div>
<div class="t" style="left:126px;top:385px;width:120px">2019-Jan-14</div>
<div class="t" style="left:248px;top:385px;width:96px">1:30pm</div>
<div class="t" style="left:346px;top:385px;width:205px">OCT - Retina</div>
<div class="t" style="left:553px;top:385px;width:74px">22067</div>
<div class="t" style="left:629px;top:385px;width:59px">250</div>
<div class="t" style="left:690px;top:385px;width:121px">Diabetes</div>
<div class="t" style="left:813px;top:385px;width:323px">Chu (Abby Testing), Gabriel [63223]</div>
<div class="t" style="left:1138px;top:385px;width:48px">1</div>
<div class="t" style="left:1188px;top:385px;width:110px">$55.13</div>
<div class="t" style="left:1300px;top:385px;width:149px">$0.00</div>
<div class="t" style="left:126px;top:405px;width:120px">2019-Jan-14</div>
<div class="t" style="left:248px;top:405px;width:96px">1:30pm</div>
<div class="t" style="left:346px;top:405px;width:205px">OCT - Retina</div>
<div class="t" style="left:553px;top:405px;width:74px">02039</div>
<div class="t" style="left:629px;top:405px;width:59px">250</div>
<div class="t" style="left:690px;top:405px;width:121px">Diabetes</div>
<div class="t" style="left:813px;top:405px;width:323px">Chu (Abby Testing), Gabriel [63223]</div>
<div class="t" style="left:1138px;top:405px;width:48px">1</div>
<div class="t" style="left:1188px;top:405px;width:110px">$6.65</div>
<div class="t" style="left:1300px;top:405px;width:149px">$0.00</div>
<div class="t" style="left:126px;top:425px;width:120px">2019-Jan-14</div>
<div class="t" style="left:248px;top:425px;width:96px">1:30pm</div>
<div class="t" style="left:346px;top:425px;width:205px">New Adult Consult</div>
<div class="t" style="left:553px;top:425px;width:74px">02010</div>
<div class="t" style="left:629px;top:425px;width:59px">3710</div>
<div class="t" style="left:690px;top:425px;width:121px">Diabetes</div>
<div class="t" style="left:813px;top:425px;width:323px">Chu, Gabriel [63223]</div>
<div class="t" style="left:1138px;top:425px;width:48px">1</div>
<div class="t" style="left:1188px;top:425px;width:110px">$95.97</div>
<div class="t" style="left:1300px;top:425px;width:149px">$0.00</div>
<div class="t" style="left:126px;top:445px;width:120px">2019-Jan-14</div>
<div class="t" style="left:248px;top:445px;width:96px">1:30pm</div>
<div class="t" style="left:346px;top:445px;width:205px">New Adult Consult</div>
<div class="t" style="left:553px;top:445px;width:74px">22046</div>
<div class="t" style="left:629px;top:445px;width:59px">250</div>
<div class="t" style="left:690px;top:445px;width:121px">Diabetes</div>
<div class="t" style="left:813px;top:445px;width:323px">Chu, Gabriel [63223]</div>
<div class="t" style="left:1138px;top:445px;width:48px">1</div>
<div class="t" style="left:1188px;top:445px;width:110px">$5.56</div>
<div class="t" style="left:1300px;top:445px;width:149px">$0.00</div>
<div class="t" style="left:126px;top:465px;width:120px">2019-Jul-18</div>
<div class="t" style="left:248px;top:465px;width:96px">8:00am</div>
<div class="t" style="left:346px;top:465px;width:205px">OCT - Retina</div>
<div class="t" style="left:553px;top:465px;width:74px">22067</div>
<div class="t" style="left:629px;top:465px;width:59px">250</div>
<div class="t" style="left:690px;top:465px;width:121px">Diabetes</div>
<div class="t" style="left:813px;top:465px;width:323px">Chu (Abby Testing), Gabriel [63223]</div>
<div class="t" style="left:1138px;top:465px;width:48px">1</div>
<div class="t" style="left:1188px;top:465px;width:110px">$55.54</div>
<div class="t" style="left:1300px;top:465px;width:149px">$0.00</div>
<div class="t" style="left:126px;top:485px;width:120px">2019-Jul-18</div>
<div class="t" style="left:248px;top:485px;width:96px">8:00am</div>
<div class="t" style="left:346px;top:485px;width:205px">OCT - Retina</div>
<div class="t" style="left:553px;top:485px;width:74px">02039</div>
<div class="t" style="left:629px;top:485px;width:59px">250</div>
<div class="t" style="left:690px;top:485px;width:121px">Diabetes</div>
<div class="t" style="left:813px;top:485px;width:323px">Chu (Abby Testing), Gabriel [63223]</div>
<div class="t" style="left:1138px;top:485px;width:48px">1</div>
<div class="t" style="left:1188px;top:485px;width:110px">$6.70</div>
<div class="t" style="left:1300px;top:485px;width:149px">$0.00</div>
<div class="t" style="left:126px;top:505px;width:120px">2019-Jul-18</div>
<div class="t" style="left:248px;top:505px;width:96px">8:15am</div>
<div class="t" style="left:346px;top:505px;width:205px">OD HVF</div>
<div class="t" style="left:553px;top:505px;width:74px">02893</div>
<div class="t" style="left:629px;top:505px;width:59px">250</div>
<div class="t" style="left:690px;top:505px;width:121px">Diabetes</div>
<div class="t" style="left:813px;top:505px;width:323px">Dhaliwal, OD (Abbotsford Testing), Kulvir [...</div>
<div class="t" style="left:1138px;top:505px;width:48px">1</div>
<div class="t" style="left:1188px;top:505px;width:110px">$32.40</div>
<div class="t" style="left:1300px;top:505px;width:149px">$0.00</div>
<div class="t" style="left:126px;top:525px;width:120px">2019-Jul-18</div>
<div class="t" style="left:248px;top:525px;width:96px">8:30am</div>
<div class="t" style="left:346px;top:525px;width:205px">OD Major SM Tube</div>
<div class="t" style="left:553px;top:525px;width:74px">02898</div>
<div class="t" style="left:629px;top:525px;width:59px">370</div>
<div class="t" style="left:690px;top:525px;width:121px">Diabetes</div>
<div class="t" style="left:813px;top:525px;width:323px">Dhaliwal, OD (Abby), Kulvir [88892]</div>
<div class="t" style="left:1138px;top:525px;width:48px">1</div>
<div class="t" style="left:1188px;top:525px;width:110px">$29.92</div>
<div class="t" style="left:1300px;top:525px;width:149px">$0.00</div>
<div class="t" style="left:126px;top:545px;width:120px">2020-Jan-23</div>
<div class="t" style="left:248px;top:545px;width:96px">11:00am</div>
<div class="t" style="left:346px;top:545px;width:205px">HVF 30-2</div>
<div class="t" style="left:553px;top:545px;width:74px">02043</div>
<div class="t" style="left:629px;top:545px;width:59px">37434</div>
<div class="t" style="left:690px;top:545px;width:121px">Dermatochalasis</div>
<div class="t" style="left:813px;top:545px;width:323px">Chu (Abby Testing), Gabriel [63223]</div>
<div class="t" style="left:1138px;top:545px;width:48px">1</div>
<div class="t" style="left:1188px;top:545px;width:110px">$63.32</div>
<div class="t" style="left:1300px;top:545px;width:149px">$63.32</div>
<div class="t" style="left:126px;top:565px;width:120px">2020-Jan-23</div>
<div class="t" style="left:248px;top:565px;width:96px">11:00am</div>
<div class="t" style="left:346px;top:565px;width:205px"></div>
<div class="t" style="left:553px;top:565px;width:74px">02019</div>
<div class="t" style="left:629px;top:565px;width:59px">37434</div>
<div class="t" style="left:690px;top:565px;width:121px">Dermatochalasis</div>
<div class="t" style="left:813px;top:565px;width:323px">Chu (Abby Testing), Gabriel [63223]</div>
<div class="t" style="left:1138px;top:565px;width:48px">1</div>
<div class="t" style="left:1188px;top:565px;width:110px">$15.98</div>
<div class="t" style="left:1300px;top:565px;width:149px">$15.98</div>
<div class="t" style="left:126px;top:585px;width:120px">2020-Jan-23</div>
<div class="t" style="left:248px;top:585px;width:96px">11:20am</div>
<div class="t" style="left:346px;top:585px;width:205px"></div>
<div class="t" style="left:553px;top:585px;width:74px">02898</div>
<div class="t" style="left:629px;top:585px;width:59px">37434</div>
<div class="t" style="left:690px;top:585px;width:121px">Dermatochalasis</div>
<div class="t" style="left:813px;top:585px;width:323px">Dhaliwal, OD (Abby), Kulvir [88892]</div>
<div class="t" style="left:1138px;top:585px;width:48px">1</div>
<div class="t" style="left:1188px;top:585px;width:110px">$29.92</div>
<div class="t" style="left:1300px;top:585px;width:149px">$29.92</div>
<div class="t" style="left:126px;top:605px;width:120px">2020-Jan-29</div>
<div class="t" style="left:248px;top:605px;width:96px">8:00am</div>
<div class="t" style="left:346px;top:605px;width:205px"></div>
<div class="t" style="left:553px;top:605px;width:74px">02010</div>
<div class="t" style="left:629px;top:605px;width:59px">250</div>
<div class="t" style="left:690px;top:605px;width:121px">Diabetes</div>
<div class="t" style="left:813px;top:605px;width:323px">Chu, Gabriel [63223]</div>
<div class="t" style="left:1138px;top:605px;width:48px">1</div>
<div class="t" style="left:1188px;top:605px;width:110px">$96.69</div>
<div class="t" style="left:1300px;top:605px;width:149px">$96.69</div>
<div class="t" style="left:126px;top:625px;width:120px">2020-Jan-29</div>
<div class="t" style="left:248px;top:625px;width:96px">8:00am</div>
<div class="t" style="left:346px;top:625px;width:205px"></div>
<div class="t" style="left:553px;top:625px;width:74px">22067</div>
<div class="t" style="left:629px;top:625px;width:59px">250</div>
<div class="t" style="left:690px;top:625px;width:121px">Diabetes</div>
<div class="t" style="left:813px;top:625px;width:323px">Chu (Abby Testing), Gabriel [63223]</div>
<div class="t" style="left:1138px;top:625px;width:48px">1</div>
<div class="t" style="left:1188px;top:625px;width:110px">$55.54</div>
<div class="t" style="left:1300px;top:625px;width:149px">$55.54</div>
<div class="t" style="left:126px;top:645px;width:120px">2020-Jan-29</div>
<div class="t" style="left:248px;top:645px;width:96px">8:00am</div>
<div class="t" style="left:346px;top:645px;width:205px"></div>
<div class="t" style="left:553px;top:645px;width:74px">02039</div>
<div class="t" style="left:629px;top:645px;width:59px">250</div>
<div class="t" style="left:690px;top:645px;width:121px">Diabetes</div>
<div class="t" style="left:813px;top:645px;width:323px">Chu (Abby Testing), Gabriel [63223]</div>
<div class="t" style="left:1138px;top:645px;width:48px">1</div>
<div class="t" style="left:1188px;top:645px;width:110px">$6.70</div>
<div class="t" style="left:1300px;top:645px;width:149px">$6.70</div>
<div class="ab" style="left:124px;top:850px;width:1400px;height:17px;background:#fff;border-top:1px solid #b8b8b8"></div>
<div class="ab" style="left:141px;top:851px;width:1085px;height:16px;background:#e2e2e2;border-left:1px solid #c8c8c8"></div>
<svg class="ab" style="left:130px;top:854px" width="8" height="9"><path d="M6 0.5 L1.5 4.5 L6 8.5" fill="none" stroke="#777" stroke-width="1.2"/></svg>
<div class="ab" style="left:679px;top:855px;width:8px;height:7px;border-left:1.5px solid #888;border-right:1.5px solid #888"><div class="ab" style="left:1.8px;top:0;width:1.5px;height:7px;background:#888"></div></div>
<div class="ab" style="left:307px;top:551px;width:221px;height:292px;background:#f2f2f2;border:1px solid #a0a0a0"></div>
<div class="ab" style="left:336px;top:555px;width:1px;height:284px;background:#d0d0d0"></div>
<div class="t" style="left:340px;top:556px;letter-spacing:0.35px">Claim Details</div>
<div class="t" style="left:340px;top:578px;letter-spacing:0.35px">Insurer Details</div>
<div class="ab" style="left:519px;top:583px;width:0;height:0;border-left:4px solid #222;border-top:4px solid transparent;border-bottom:4px solid transparent"></div>
<div class="t" style="left:340px;top:600px;letter-spacing:0.35px">Claim History</div>
<div class="t" style="left:340px;top:622px;letter-spacing:0.35px">Options</div>
<div class="ab" style="left:519px;top:627px;width:0;height:0;border-left:4px solid #222;border-top:4px solid transparent;border-bottom:4px solid transparent"></div>
<div class="t" style="left:340px;top:644px;letter-spacing:0.35px">Set Tracking Pin</div>
<div class="ab" style="left:519px;top:649px;width:0;height:0;border-left:4px solid #222;border-top:4px solid transparent;border-bottom:4px solid transparent"></div>
<div class="t" style="left:340px;top:677px;letter-spacing:0.35px">Labels</div>
<div class="ab" style="left:519px;top:682px;width:0;height:0;border-left:4px solid #222;border-top:4px solid transparent;border-bottom:4px solid transparent"></div>
<div class="t" style="left:340px;top:699px;letter-spacing:0.35px">Appointment Confirmed</div>
<div class="t" style="left:340px;top:721px;letter-spacing:0.35px">Copy Appointment</div>
<div class="t" style="left:340px;top:743px;letter-spacing:0.35px">Cut Appointment</div>
<div class="t" style="left:340px;top:765px;letter-spacing:0.35px">Cancel Appointment</div>
<div class="t" style="left:340px;top:798px;letter-spacing:0.35px">View</div>
<div class="ab" style="left:519px;top:803px;width:0;height:0;border-left:4px solid #222;border-top:4px solid transparent;border-bottom:4px solid transparent"></div>
<div class="t" style="left:340px;top:820px;letter-spacing:0.35px">Generate</div>
<div class="ab" style="left:519px;top:825px;width:0;height:0;border-left:4px solid #222;border-top:4px solid transparent;border-bottom:4px solid transparent"></div>
<div class="ab" style="left:337px;top:668px;width:189px;height:1px;background:#c8c8c8"></div>
<div class="ab" style="left:337px;top:789px;width:189px;height:1px;background:#c8c8c8"></div>
<div class="ab" style="left:99px;top:917px;width:1313px;height:16px;background:#f6f6f6"></div>
<div class="ab" style="left:99px;top:917px;width:74px;height:16px;background:#fff;border-right:1px solid #d8d8d8;overflow:hidden"><div class="t" style="left:9px;top:3px;font-size:15px;letter-spacing:0.8px">1:40pm</div></div>
<div class="ab" style="left:221px;top:917px;width:1px;height:16px;background:#d8d8d8"></div>
<div class="ab" style="left:321px;top:917px;width:1px;height:16px;background:#d8d8d8"></div>
<div class="ab" style="left:1321px;top:917px;width:1px;height:16px;background:#d8d8d8"></div>
<div class="ab" style="left:421px;top:917px;width:100px;height:16px;background:#00cc00;border-left:2px solid #333;overflow:hidden"><div class="t" style="left:5px;top:-2px;letter-spacing:0.5px"></div></div>
<div class="ab" style="left:521px;top:917px;width:100px;height:16px;background:#00cc00;border-left:2px solid #333;overflow:hidden"><div class="t" style="left:4px;top:-8px;font-weight:bold;letter-spacing:0.6px">Norn, Nor..</div></div>
<div class="ab" style="left:621px;top:917px;width:100px;height:16px;background:#a6f8a6;border-left:2px solid #333;overflow:hidden"><div class="t" style="left:5px;top:-2px;letter-spacing:0.5px"></div></div>
<div class="ab" style="left:721px;top:917px;width:100px;height:16px;background:#7a7a7a;border-left:2px solid #333;overflow:hidden"><div class="t" style="left:5px;top:-2px;letter-spacing:0.5px"></div></div>
<div class="ab" style="left:821px;top:917px;width:100px;height:16px;background:#a8f8a0;border-left:2px solid #333;overflow:hidden"><div class="t" style="left:5px;top:-2px;letter-spacing:0.5px">1:30pm f...</div></div>
<div class="ab" style="left:921px;top:917px;width:100px;height:16px;background:#30f2d8;border-left:2px solid #333;overflow:hidden"><div class="t" style="left:5px;top:-2px;letter-spacing:0.5px">1:30pm f...</div></div>
<div class="ab" style="left:1021px;top:917px;width:100px;height:16px;background:#f6f6f6;border-left:2px solid #333;overflow:hidden"><div class="ab" style="left:1px;top:1px;right:0;bottom:-3px;border:2px solid #111;background:#aaf800"><div class="t" style="left:3px;top:-1px;font-weight:bold;letter-spacing:0.6px">Bhangu, G</div></div></div>
<div class="ab" style="left:1121px;top:917px;width:100px;height:16px;background:#f6f6f6;border-left:2px solid #333;overflow:hidden"><div class="ab" style="left:1px;top:1px;right:0;bottom:-3px;border:2px solid #111;background:#ff30b0"><div class="t" style="left:3px;top:-1px;font-weight:bold;letter-spacing:0.6px">Tubbs, Me.</div></div></div>
<div class="ab" style="left:1221px;top:917px;width:2px;height:16px;background:#333"></div>
<div class="ab" style="left:1395px;top:917px;width:17px;height:16px;background:#fff;border-left:1px solid #ddd;border-bottom:1px solid #ccc"><svg class="ab" style="left:4px;top:4px" width="9" height="6"><path d="M0.5 0.5 L4.5 5 L8.5 0.5" fill="none" stroke="#777" stroke-width="1.2"/></svg></div>
<div class="ab" style="left:99px;top:933px;width:1313px;height:18px;background:#f0f0f0;border-bottom:2px solid #b4b4b4"></div>
<div class="ab" style="left:173px;top:933px;width:1221px;height:16px;background:#fff;border-left:1px solid #ddd"></div>
<div class="ab" style="left:490px;top:933px;width:803px;height:16px;background:#e0e0e0"></div>
<div class="ab" style="left:190px;top:933px;width:1px;height:16px;background:#e4e4e4"></div>
<div class="ab" style="left:1377px;top:933px;width:1px;height:16px;background:#e4e4e4"></div>
<svg class="ab" style="left:178px;top:937px" width="8" height="9"><path d="M6 0.5 L1.5 4.5 L6 8.5" fill="none" stroke="#777" stroke-width="1.2"/></svg>
<svg class="ab" style="left:1382px;top:937px" width="8" height="9"><path d="M1.5 0.5 L6 4.5 L1.5 8.5" fill="none" stroke="#777" stroke-width="1.2"/></svg>
<div class="ab" style="left:887px;top:938px;width:8px;height:7px;border-left:1.5px solid #888;border-right:1.5px solid #888"><div class="ab" style="left:1.8px;top:0;width:1.5px;height:7px;background:#888"></div></div>
<div class="ab" style="left:1412px;top:917px;width:1px;height:53px;background:#c8c8c8"></div>
<div class="ab" style="left:1419px;top:914px;width:12px;height:9px;background:#e4e4e4;border:1px solid #8a8a8a"></div>
<div class="ab" style="left:1419px;top:926px;width:12px;height:18px;background:#e4e4e4;border:1px solid #8a8a8a"></div>
<div class="ab" style="left:1419px;top:947px;width:12px;height:18px;background:#e4e4e4;border:1px solid #8a8a8a"></div>
<div class="ab" style="left:424px;top:958px;width:73px;height:20px;background:linear-gradient(#f6f6f6,#e4e4e4);border:1px solid #9c9c9c"></div>
<div class="t" style="left:438px;top:960px;font-size:15px;letter-spacing:0.6px">Today</div>
<div class="ab" style="left:502px;top:958px;width:47px;height:20px;background:linear-gradient(#f6f6f6,#e4e4e4);border:1px solid #9c9c9c"></div>
<svg class="ab" style="left:518px;top:960px" width="16" height="12"><rect x="0.8" y="2" width="14.4" height="12" fill="none" stroke="#1a74c9" stroke-width="1.6"/><rect x="0.8" y="2" width="14.4" height="4" fill="#1a74c9"/><rect x="3.5" y="0" width="1.6" height="3.6" fill="#1a74c9"/><rect x="10.9" y="0" width="1.6" height="3.6" fill="#1a74c9"/><rect x="3" y="8" width="10" height="2" fill="#1a74c9" opacity="0.5"/></svg>
<div class="ab" style="left:554px;top:958px;width:47px;height:20px;background:linear-gradient(#f6f6f6,#e4e4e4);border:1px solid #9c9c9c"></div>
<div class="t" style="left:562px;top:959px;font-size:14px;font-weight:bold;color:#1a74c9;letter-spacing:0.2px">◂1m</div>
<div class="ab" style="left:606px;top:958px;width:47px;height:20px;background:linear-gradient(#f6f6f6,#e4e4e4);border:1px solid #9c9c9c"></div>
<div class="t" style="left:614px;top:959px;font-size:14px;font-weight:bold;color:#1a74c9;letter-spacing:0.2px">◂1w</div>
<div class="ab" style="left:658px;top:958px;width:47px;height:20px;background:linear-gradient(#f6f6f6,#e4e4e4);border:1px solid #9c9c9c"></div>
<div class="t" style="left:666px;top:959px;font-size:14px;font-weight:bold;color:#1a74c9;letter-spacing:0.2px">◂1d</div>
<div class="ab" style="left:883px;top:958px;width:46px;height:20px;background:linear-gradient(#f6f6f6,#e4e4e4);border:1px solid #9c9c9c"></div>
<div class="t" style="left:891px;top:959px;font-size:14px;font-weight:bold;color:#1a74c9;letter-spacing:0.2px">1d▸</div>
<div class="ab" style="left:935px;top:958px;width:47px;height:20px;background:linear-gradient(#f6f6f6,#e4e4e4);border:1px solid #9c9c9c"></div>
<div class="t" style="left:943px;top:959px;font-size:14px;font-weight:bold;color:#1a74c9;letter-spacing:0.2px">1w▸</div>
<div class="ab" style="left:987px;top:958px;width:47px;height:20px;background:linear-gradient(#f6f6f6,#e4e4e4);border:1px solid #9c9c9c"></div>
<div class="t" style="left:995px;top:959px;font-size:14px;font-weight:bold;color:#1a74c9;letter-spacing:0.2px">1m▸</div>
<div class="ab" style="left:1039px;top:958px;width:47px;height:20px;background:linear-gradient(#f6f6f6,#e4e4e4);border:1px solid #9c9c9c"></div>
<div class="t" style="left:1053px;top:959px;font-size:16px;font-weight:bold;color:#1a74c9">f▴</div>
<div class="t" style="left:716px;top:961px;font-size:15px;font-weight:bold;letter-spacing:-0.2px">Thursday, Jan 23, 2020</div>
<div class="ab" style="left:1428px;top:590px;width:30px;height:390px;background:#6a6a6a;border-radius:4px 0 0 0"></div>
<div class="ab" style="left:1428px;top:594px;width:4px;height:380px;background:#5a5a5a"></div>
<div class="ab" style="left:1432px;top:595px;width:20px;height:92px;background:#0c2f5d"></div>
<div class="ab" style="left:1441px;top:603px;width:12px;height:38px;background:#0f5a78;border-radius:4px"></div>
<div class="ab" style="left:1444px;top:611px;width:12px;height:22px;background:#7a8088;border-radius:50%"></div>
<div class="ab" style="left:1442px;top:666px;width:10px;height:10px;background:#777"></div>
<div class="ab" style="left:1432px;top:687px;width:1px;height:290px;background:#444"></div>
<div class="ab" style="left:1433px;top:715px;width:20px;height:1px;background:#555"></div>
<div class="ab" style="left:1433px;top:763px;width:20px;height:1px;background:#555"></div>
<div class="ab" style="left:1433px;top:790px;width:20px;height:1px;background:#555"></div>
<svg class="ab" style="left:1438px;top:700px" width="11" height="7"><path d="M0 0 H11 L5.5 6.5 Z" fill="#2f3a44"/></svg>
<svg class="ab" style="left:1438px;top:775px" width="11" height="7"><path d="M0 0 H11 L5.5 6.5 Z" fill="#2f3a44"/></svg>
<div class="ab" style="left:1440px;top:729px;width:12px;height:18px;border:1px solid #444;background:#6e6e6e"><div class="ab" style="left:4px;top:3px;width:8px;height:8px;border-radius:50%;background:#3d4650"></div><div class="ab" style="left:1px;top:10px;width:12px;height:8px;border-radius:6px 6px 0 0;background:#3d4650"></div></div>
<div class="ab" style="left:1438px;top:801px;width:14px;height:89px;background:#6e6e6e;border-left:2px solid #3a3a3a;border-top:2px solid #3a3a3a"></div>
<div class="ab" style="left:1441px;top:806px;font-size:12px;line-height:13px;color:#4a7a2a;white-space:nowrap">1</div>
<div class="ab" style="left:1441px;top:818px;font-size:12px;line-height:13px;color:#1a1a1a;white-space:nowrap">nc</div>
<div class="ab" style="left:1441px;top:831px;font-size:12px;line-height:13px;color:#1c4a8a;white-space:nowrap">Cl</div>
<div class="ab" style="left:1441px;top:843px;font-size:12px;line-height:13px;color:#1a1a1a;white-space:nowrap">oc</div>
<div class="ab" style="left:1441px;top:856px;font-size:12px;line-height:13px;color:#1a1a1a;white-space:nowrap">d</div>
<div class="ab" style="left:1441px;top:868px;font-size:12px;line-height:13px;color:#1a1a1a;white-space:nowrap">ca</div>
<div class="ab" style="left:1438px;top:897px;width:14px;height:22px;background:#6e6e6e;border-left:2px solid #3a3a3a;border-top:2px solid #3a3a3a"><div class="ab" style="left:2px;top:2px;font-size:13px;font-style:italic;color:#111">7</div></div>
<svg class="ab" style="left:1402px;top:687px" width="27" height="55"><path d="M27 0 H4 Q1 0 1 3 V37 L26 53 H27 Z" fill="#6a6a6a" stroke="#555" stroke-width="1"/><path d="M11 12 L16.5 17 L11 22" fill="none" stroke="#2a2a2a" stroke-width="2.4"/></svg>
<div class="ab" style="left:3px;top:106px;width:94px;height:57px;border:3px solid #fa2a0a;border-radius:2px"></div>
<div class="ab" style="left:167px;top:88px;font-weight:bold;font-size:17.3px;line-height:22px;color:#fa2d0c;white-space:nowrap;-webkit-text-stroke:0.5px #fa2d0c;text-shadow:1.5px 1.5px 0 #fff,-1.5px -1.5px 0 #fff,1.5px -1.5px 0 #fff,-1.5px 1.5px 0 #fff,0 2px 0 #fff,2px 0 0 #fff,-2px 0 0 #fff,0 -2px 0 #fff,2px 3px 3px rgba(0,0,0,0.45)">Select Schedule, hit F4 to bring up Quick<br>Patient Appointments View which lists<br>all appointments for that patient.</div>
<div class="ab" style="left:636px;top:750px;font-weight:bold;font-size:17.1px;line-height:22px;color:#fa2d0c;white-space:nowrap;-webkit-text-stroke:0.5px #fa2d0c;text-shadow:1.5px 1.5px 0 #fff,-1.5px -1.5px 0 #fff,1.5px -1.5px 0 #fff,-1.5px 1.5px 0 #fff,0 2px 0 #fff,2px 0 0 #fff,-2px 0 0 #fff,0 -2px 0 #fff,2px 3px 3px rgba(0,0,0,0.45)">Add option to select 'Arrived' the same as you can from the main schedule.</div>
<div class="ab" style="left:304px;top:778px;width:228px;height:23px;border:3px solid #fa2a0a;border-radius:2px"></div>
<svg class="ab" style="left:0;top:0" width="1449" height="970"><path d="M96 133 Q110 125 124 119.8 L118.3 127.6 Q140 130 162 131.2 Q163.8 132.8 162 134.4 Q140 136 118.3 139 L124 147.6 Q110 141 96 133 Z" fill="#fa2d0c" style="filter:drop-shadow(1px 2px 1.5px rgba(0,0,0,0.35))"/><path d="M548.6 782.4 Q566 773 583 765.6 L580.4 775.5 Q607 779 633 780.6 Q635.4 782.3 633 784 Q607 786 580.4 790 L583 799.7 Q566 792 548.6 782.4 Z" fill="#fa2d0c" style="filter:drop-shadow(1px 2px 1.5px rgba(0,0,0,0.35))"/></svg>
</body></html>
